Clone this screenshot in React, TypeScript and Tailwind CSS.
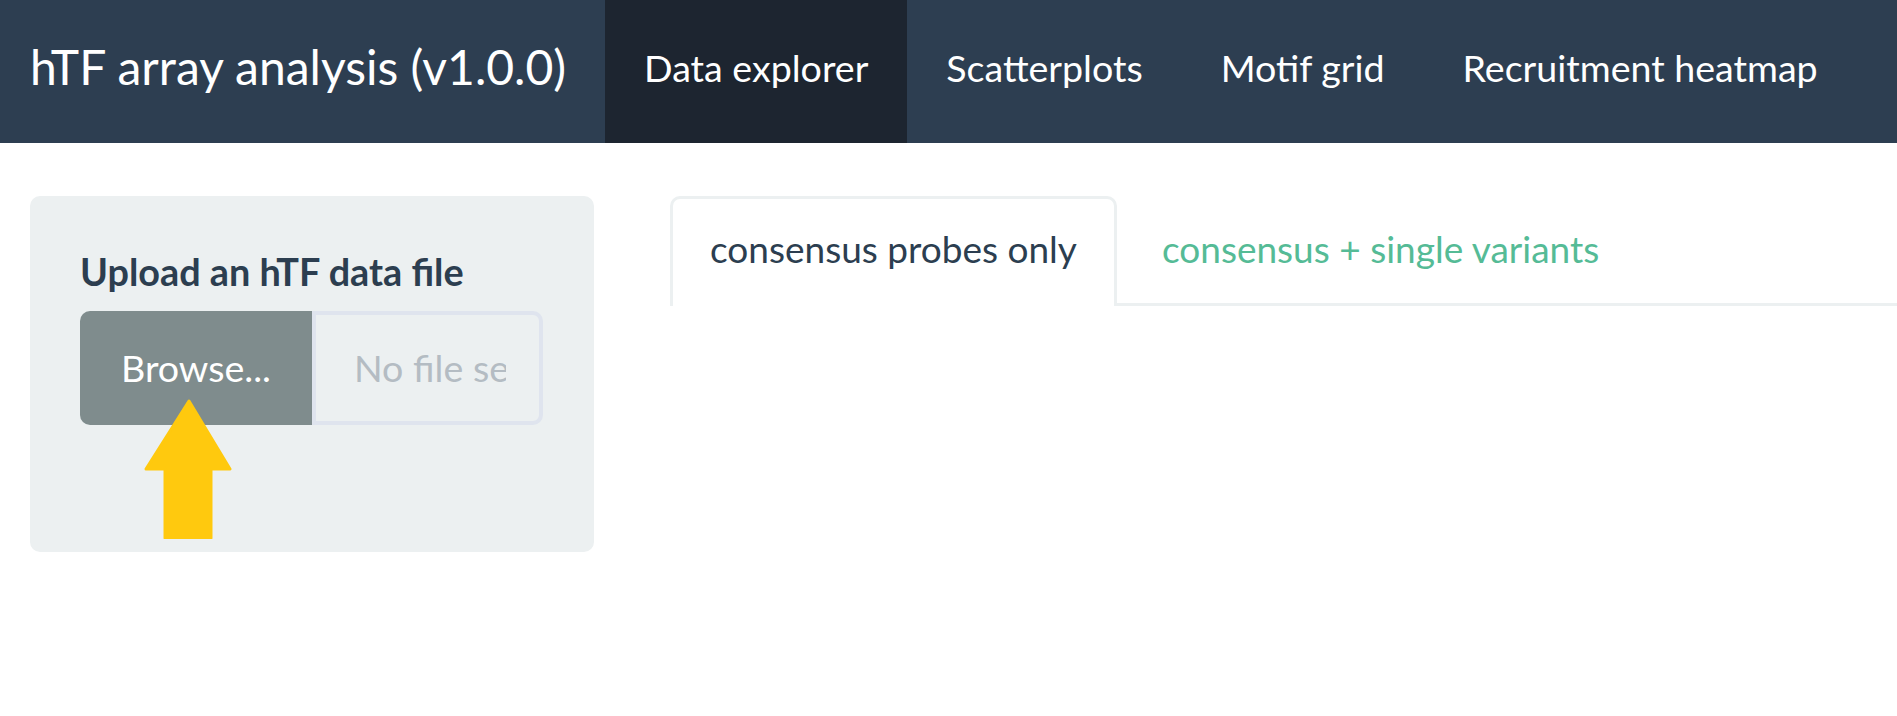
import React from "react";

export default function App() {
  return (
    <div className="min-h-[716px] bg-white font-['Lato',sans-serif] text-[#2c3e50]">
      <nav className="flex h-[143px] items-stretch bg-[#2d3e51] text-white">
        <div className="flex items-center pb-[9px] pl-[30px] pr-[39px] text-[48px] leading-none whitespace-nowrap">
          hTF array analysis (v1.0.0)
        </div>
        <div className="flex items-center bg-[#1d2530] px-[39px] pb-[7px] text-[37.6px] leading-none whitespace-nowrap">
          Data explorer
        </div>
        <div className="flex items-center px-[39px] pb-[7px] text-[37.6px] leading-none whitespace-nowrap">
          Scatterplots
        </div>
        <div className="flex items-center px-[39px] pb-[7px] text-[37.6px] leading-none whitespace-nowrap">
          Motif grid
        </div>
        <div className="flex items-center px-[39px] pb-[7px] text-[37.6px] leading-none whitespace-nowrap">
          Recruitment heatmap
        </div>
      </nav>

      <div className="flex pt-[53px]">
        <div className="relative ml-[30px] h-[356px] w-[564px] shrink-0 rounded-[10px] bg-[#ecf0f1] px-[50px] pt-[53px]">
          <div className="mb-[16px] text-[37.8px] font-bold leading-[46px] whitespace-nowrap text-[#2c3e50]">
            Upload an hTF data file
          </div>
          <div className="flex h-[114px]">
            <div className="flex w-[232px] items-center justify-center rounded-l-[10px] bg-[#7f8c8d] text-[37.6px] leading-none text-white">
              Browse...
            </div>
            <div className="flex w-[231px] items-center rounded-r-[10px] border-[4px] border-[#dfe4ee] bg-[#ecf0f1] pl-[38px] pr-[33px]">
              <div className="overflow-hidden whitespace-nowrap text-[37.6px] leading-[46px] text-[#b4bcc3]">
                No file selected
              </div>
            </div>
          </div>
          <svg
            className="absolute left-[114px] top-[203px]"
            width="88"
            height="140"
            viewBox="0 0 88 140"
          >
            <polygon
              points="45,2 86,70 67,70 67,139 21,139 21,70 2,70"
              fill="#ffc90e"
              stroke="#ffc90e"
              strokeWidth="3"
              strokeLinejoin="round"
            />
          </svg>
        </div>

        <div className="ml-[76px] flex-1">
          <div className="flex border-b-[3px] border-[#ecf0f1]">
            <div className="-mb-[3px] rounded-t-[10px] border-[3px] border-b-0 border-[#ecf0f1] bg-white px-[37px] pt-[27px] pb-[31px] text-[37px] leading-[46px] whitespace-nowrap text-[#2c3e50]">
              consensus probes only
            </div>
            <div className="-mb-[3px] ml-[5px] border-[3px] border-transparent px-[37px] pt-[27px] pb-[31px] text-[37px] leading-[46px] whitespace-nowrap text-[#55bb96]">
              consensus + single variants
            </div>
          </div>
        </div>
      </div>
    </div>
  );
}
